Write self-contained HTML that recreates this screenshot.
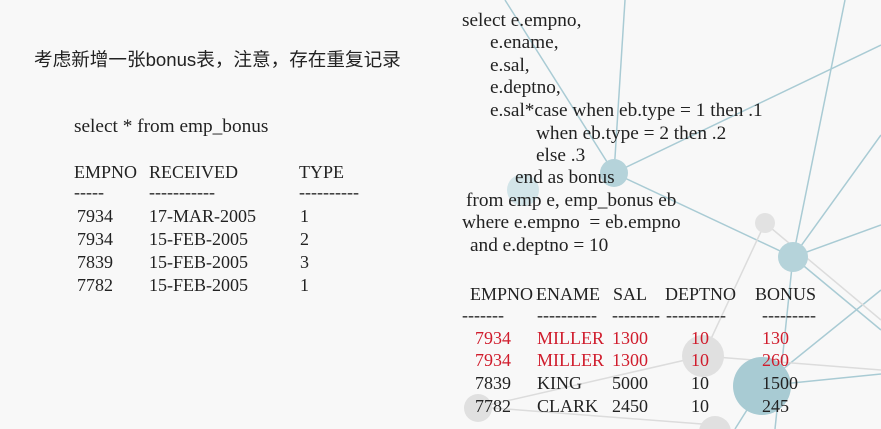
<!DOCTYPE html>
<html><head><meta charset="utf-8"><style>
body{margin:0;width:881px;height:429px;background:#f8f8f8;overflow:hidden;position:relative;font-family:"Liberation Serif",serif;font-size:19.3px;color:#222}
svg{position:absolute;left:0;top:0}
.t{position:absolute;white-space:pre;line-height:20px}
.s{font-size:18px;margin-top:1px}
.r{color:#d01c2c}
</style></head><body>
<svg width="881" height="429">
<g stroke="#a9cbd4" stroke-width="1.5" fill="none">
<line x1="614" y1="173" x2="625" y2="0"/>
<line x1="614" y1="173" x2="505" y2="0"/>
<line x1="614" y1="173" x2="881" y2="45"/>
<line x1="614" y1="173" x2="793" y2="257"/>
<line x1="793" y1="257" x2="845" y2="0"/>
<line x1="793" y1="257" x2="881" y2="225"/>
<line x1="793" y1="257" x2="881" y2="135"/>
<line x1="793" y1="257" x2="881" y2="330"/>
<line x1="793" y1="257" x2="775" y2="429"/>
<line x1="762" y1="386" x2="881" y2="290"/>
<line x1="762" y1="386" x2="881" y2="374"/>
<line x1="762" y1="386" x2="735" y2="429"/>
</g>
<g stroke="#dcdcdc" stroke-width="1.5" fill="none">
<line x1="765" y1="223" x2="703" y2="356"/>
<line x1="765" y1="223" x2="881" y2="320"/>
<line x1="480" y1="407" x2="703" y2="356"/>
<line x1="703" y1="356" x2="881" y2="370"/>
<line x1="480" y1="407" x2="715" y2="425"/>
</g>
<circle cx="614" cy="173" r="14" fill="#b5d3da"/>
<circle cx="523" cy="190" r="16" fill="#d3e5e9"/>
<circle cx="793" cy="257" r="15" fill="#b5d3da"/>
<circle cx="765" cy="223" r="10" fill="#e2e2e2"/>
<circle cx="703" cy="356" r="21" fill="#e0e0e0"/>
<circle cx="762" cy="386" r="29" fill="#a8cbd3"/>
<circle cx="478" cy="408" r="14" fill="#e0e0e0"/>
<circle cx="715" cy="432" r="16" fill="#e0e0e0"/>
</svg>
<div class="t" style="left:34px;top:50px;font-family:'Liberation Sans','Noto Sans CJK SC',sans-serif;font-size:18.6px">考虑新增一张bonus表，注意，存在重复记录</div>
<div class="t" style="left:74px;top:117px">select * from emp_bonus</div>
<div class="t s" style="left:74px;top:161px">EMPNO</div><div class="t s" style="left:149px;top:161px">RECEIVED</div><div class="t s" style="left:299px;top:161px">TYPE</div>
<div class="t s" style="left:74px;top:181px">-----</div><div class="t s" style="left:149px;top:181px">-----------</div><div class="t s" style="left:299px;top:181px">----------</div>
<div class="t s" style="left:77px;top:205px">7934</div><div class="t s" style="left:149px;top:205px">17-MAR-2005</div><div class="t s" style="left:300px;top:205px">1</div>
<div class="t s" style="left:77px;top:228px">7934</div><div class="t s" style="left:149px;top:228px">15-FEB-2005</div><div class="t s" style="left:300px;top:228px">2</div>
<div class="t s" style="left:77px;top:251px">7839</div><div class="t s" style="left:149px;top:251px">15-FEB-2005</div><div class="t s" style="left:300px;top:251px">3</div>
<div class="t s" style="left:77px;top:274px">7782</div><div class="t s" style="left:149px;top:274px">15-FEB-2005</div><div class="t s" style="left:300px;top:274px">1</div>

<div class="t" style="left:462px;top:11px">select e.empno,</div>
<div class="t" style="left:490px;top:33px">e.ename,</div>
<div class="t" style="left:490px;top:56px">e.sal,</div>
<div class="t" style="left:490px;top:78px">e.deptno,</div>
<div class="t" style="left:490px;top:101px">e.sal*case when eb.type = 1 then .1</div>
<div class="t" style="left:536px;top:124px">when eb.type = 2 then .2</div>
<div class="t" style="left:536px;top:146px">else .3</div>
<div class="t" style="left:515px;top:168px">end as bonus</div>
<div class="t" style="left:466px;top:191px">from emp e, emp_bonus eb</div>
<div class="t" style="left:462px;top:213px">where e.empno  = eb.empno</div>
<div class="t" style="left:470px;top:236px">and e.deptno = 10</div>

<div class="t s" style="left:470px;top:283px">EMPNO</div><div class="t s" style="left:536px;top:283px">ENAME</div><div class="t s" style="left:613px;top:283px">SAL</div><div class="t s" style="left:665px;top:283px">DEPTNO</div><div class="t s" style="left:755px;top:283px">BONUS</div>
<div class="t s" style="left:462px;top:304px">-------</div><div class="t s" style="left:537px;top:304px">----------</div><div class="t s" style="left:612px;top:304px">--------</div><div class="t s" style="left:666px;top:304px">----------</div><div class="t s" style="left:762px;top:304px">---------</div>
<div class="t s r" style="left:475px;top:327px">7934</div><div class="t s r" style="left:537px;top:327px">MILLER</div><div class="t s r" style="left:612px;top:327px">1300</div><div class="t s r" style="left:691px;top:327px">10</div><div class="t s r" style="left:762px;top:327px">130</div>
<div class="t s r" style="left:475px;top:349px">7934</div><div class="t s r" style="left:537px;top:349px">MILLER</div><div class="t s r" style="left:612px;top:349px">1300</div><div class="t s r" style="left:691px;top:349px">10</div><div class="t s r" style="left:762px;top:349px">260</div>
<div class="t s" style="left:475px;top:372px">7839</div><div class="t s" style="left:537px;top:372px">KING</div><div class="t s" style="left:612px;top:372px">5000</div><div class="t s" style="left:691px;top:372px">10</div><div class="t s" style="left:762px;top:372px">1500</div>
<div class="t s" style="left:475px;top:395px">7782</div><div class="t s" style="left:537px;top:395px">CLARK</div><div class="t s" style="left:612px;top:395px">2450</div><div class="t s" style="left:691px;top:395px">10</div><div class="t s" style="left:762px;top:395px">245</div>
</body></html>
